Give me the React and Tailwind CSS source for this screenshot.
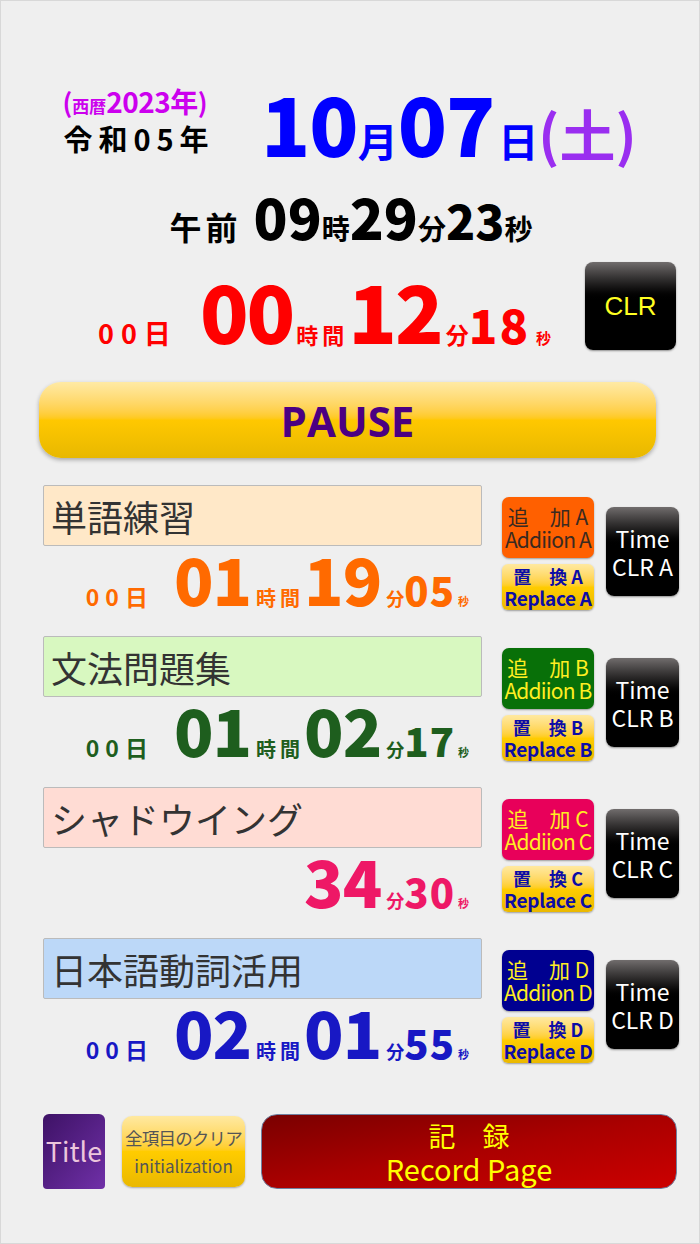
import React from "react";

const rows = [
  {
    title: "単語練習",
    titleBg: "bg-[#ffe8c8]",
    color: "text-[#ff6a00]",
    day: "00",
    hour: "01",
    min: "19",
    sec: "05",
    letter: "A",
    addBg: "bg-[#ff6000]",
    addText: "text-[#3a2a20]",
  },
  {
    title: "文法問題集",
    titleBg: "bg-[#d8f8c0]",
    color: "text-[#1e5e1e]",
    day: "00",
    hour: "01",
    min: "02",
    sec: "17",
    letter: "B",
    addBg: "bg-[#087008]",
    addText: "text-[#ffee22]",
  },
  {
    title: "シャドウイング",
    titleBg: "bg-[#ffdcd4]",
    color: "text-[#ee1866]",
    day: null,
    hour: null,
    min: "34",
    sec: "30",
    letter: "C",
    addBg: "bg-[#e8005a]",
    addText: "text-[#ffee22]",
  },
  {
    title: "日本語動詞活用",
    titleBg: "bg-[#bcd8f8]",
    color: "text-[#1818c4]",
    day: "00",
    hour: "02",
    min: "01",
    sec: "55",
    letter: "D",
    addBg: "bg-[#000090]",
    addText: "text-[#ffee22]",
  },
];

// small timer shown under each study item
function ItemTimer({ row }) {
  return (
    <div className={`flex items-baseline justify-end pr-[13px] leading-none font-bold ${row.color}`}>
      {row.day && (
        <span className="text-[23px] tracking-[6px] mr-[20px]">
          {row.day}日
        </span>
      )}
      {row.hour && (
        <>
          <span className="text-[65px] font-black tracking-[-1px]">{row.hour}</span>
          <span className="text-[20px] tracking-[4px] ml-[5px]">時間</span>
        </>
      )}
      <span className="text-[65px] font-black tracking-[-1px]">{row.min}</span>
      <span className="text-[18px] ml-[5px]">分</span>
      <span className="text-[40px] font-black tracking-[1px]">{row.sec}</span>
      <span className="text-[11px] ml-[3px]">秒</span>
    </div>
  );
}

function ItemRow({ row, first }) {
  return (
    <div className={`flex items-start ${first ? "mt-[27px]" : "mt-[24px]"}`}>
      <div className="w-[439px] ml-[42px]">
        <div className={`h-[61px] border border-[#bbbbbb] rounded-[2px] flex items-center pl-[7px] text-[36px] text-[#333333] ${row.titleBg}`}>
          {row.title}
        </div>
        <div className="h-[66px]">
          <ItemTimer row={row} />
        </div>
      </div>
      <div className="ml-[20px] w-[92px] flex flex-col gap-[6px] mt-[12px]">
        <div className={`h-[61px] rounded-[7px] shadow-[0_1px_2px_rgba(0,0,0,0.35)] flex flex-col items-center justify-center leading-[23px] text-[21px] ${row.addBg} ${row.addText}`}>
          <span>追　加 {row.letter}</span>
          <span className="tracking-[-0.8px] whitespace-nowrap">Addiion {row.letter}</span>
        </div>
        <div className="h-[46px] rounded-[6px] bg-gradient-to-b from-[#ffe9a0] via-[#ffcc00] to-[#eab800] shadow-[0_1px_2px_rgba(0,0,0,0.35)] flex flex-col items-center justify-center leading-[22px] text-[18px] font-bold text-[#0c0ca6]">
          <span>置　換 {row.letter}</span>
          <span className="text-[19px] tracking-[-0.3px] whitespace-nowrap">Replace {row.letter}</span>
        </div>
      </div>
      <div className="ml-[12px] w-[73px] h-[89px] mt-[22px] rounded-[8px] bg-gradient-to-b from-[#716d6d] via-[#000000] via-45% to-[#000000] shadow-[0_1px_2px_rgba(0,0,0,0.4)] flex flex-col items-center justify-center text-white text-[23px] leading-[28px]">
        <span>Time</span>
        <span className="whitespace-nowrap">CLR {row.letter}</span>
      </div>
    </div>
  );
}

export default function App() {
  return (
    <div className="w-[700px] h-[1244px] bg-[#efefef] border border-[#d8d8d8] font-['Noto_Sans_CJK_JP','Noto_Sans',sans-serif] overflow-hidden">
      {/* Date */}
      <div className="flex items-end pt-[80px]">
        <div className="w-[176px] ml-[46px] flex flex-col items-center font-bold leading-none mb-[9px]">
          <div className="flex items-baseline text-[#cc00ee]">
            <span className="text-[26px]">(</span>
            <span className="text-[17px]">西暦</span>
            <span className="text-[28px] tracking-[-0.5px]">2023年</span>
            <span className="text-[26px]">)</span>
          </div>
          <div className="text-[29px] tracking-[6px] text-black mt-[9px] ml-[8px]">令和05年</div>
        </div>
        <div className="ml-[38px] flex items-baseline font-bold leading-none">
          <span className="text-[81px] font-black text-[#0000ff] tracking-[-1px]">10</span>
          <span className="text-[40px] text-[#0000ff]">月</span>
          <span className="text-[81px] font-black text-[#0000ff] tracking-[-1px]">07</span>
          <span className="text-[40px] text-[#0000ff] ml-[4px]">日</span>
          <span className="text-[56px] text-[#9a2ef0]">(土)</span>
        </div>
      </div>

      {/* Clock */}
      <div className="flex items-baseline justify-center font-bold leading-none text-black mt-[26px] ml-[2px]">
        <span className="text-[32px] tracking-[4px] mr-[12px]">午前</span>
        <span className="text-[56px] font-black">09</span>
        <span className="text-[28px]">時</span>
        <span className="text-[56px] font-black">29</span>
        <span className="text-[28px]">分</span>
        <span className="text-[48px] font-black">23</span>
        <span className="text-[28px]">秒</span>
      </div>

      {/* Total elapsed */}
      <div className="flex items-center mt-[18px]">
        <div className="flex items-baseline ml-[97px] font-bold leading-none text-[#ff0000] mt-[6px]">
          <span className="text-[27px] tracking-[7px] mr-[22px]">00日</span>
          <span className="text-[80px] font-black tracking-[-2px]">00</span>
          <span className="text-[22px] tracking-[4px] ml-[3px]">時間</span>
          <span className="text-[80px] font-black tracking-[-2px]">12</span>
          <span className="text-[23px] ml-[4px]">分</span>
          <span className="text-[47px] font-black tracking-[2px]">18</span>
          <span className="text-[15px] ml-[6px]">秒</span>
        </div>
        <button className="ml-auto mr-[23px] w-[91px] h-[88px] rounded-[8px] bg-gradient-to-b from-[#716d6d] via-[#000000] via-45% to-[#000000] shadow-[0_1px_2px_rgba(0,0,0,0.4)] text-[#ffff22] text-[26px] font-['Liberation_Sans',sans-serif]">
          CLR
        </button>
      </div>

      {/* Pause */}
      <div className="mt-[32px] ml-[38px] w-[617px] h-[76px] rounded-[22px] bg-gradient-to-b from-[#ffeaa4] via-[#ffc800] to-[#e8b800] shadow-[0_2px_4px_rgba(0,0,0,0.3)] flex items-center justify-center text-[42px] font-bold text-[#4b0082] font-['Open_Sans',sans-serif]">
        PAUSE
      </div>

      {rows.map((row, i) => (
        <ItemRow key={row.letter} row={row} first={i === 0} />
      ))}

      {/* Bottom buttons */}
      <div className="flex items-center mt-[49px] ml-[42px]">
        <div className="w-[62px] h-[75px] rounded-t-[6px] rounded-b-[4px] bg-gradient-to-br from-[#3e1266] to-[#7030a8] flex items-center justify-center text-[#ecc6dc] text-[27px]">
          Title
        </div>
        <div className="ml-[17px] w-[123px] h-[71px] rounded-[10px] bg-gradient-to-b from-[#ffe9a0] via-[#ffcc00] to-[#eab800] shadow-[0_1px_2px_rgba(0,0,0,0.3)] flex flex-col items-center justify-center text-[#555555] leading-[28px]">
          <span className="text-[17.5px] tracking-[-0.8px] whitespace-nowrap">全項目のクリア</span>
          <span className="text-[17px]">initialization</span>
        </div>
        <div className="ml-[16px] w-[416px] h-[75px] rounded-[16px] border border-[#7080a0] bg-gradient-to-br from-[#7a0000] via-[#aa0000] to-[#cc0000] flex flex-col items-center justify-center text-[#ffff00] leading-[32px]">
          <span className="text-[27px]">記　録</span>
          <span className="text-[29px]">Record Page</span>
        </div>
      </div>
    </div>
  );
}
